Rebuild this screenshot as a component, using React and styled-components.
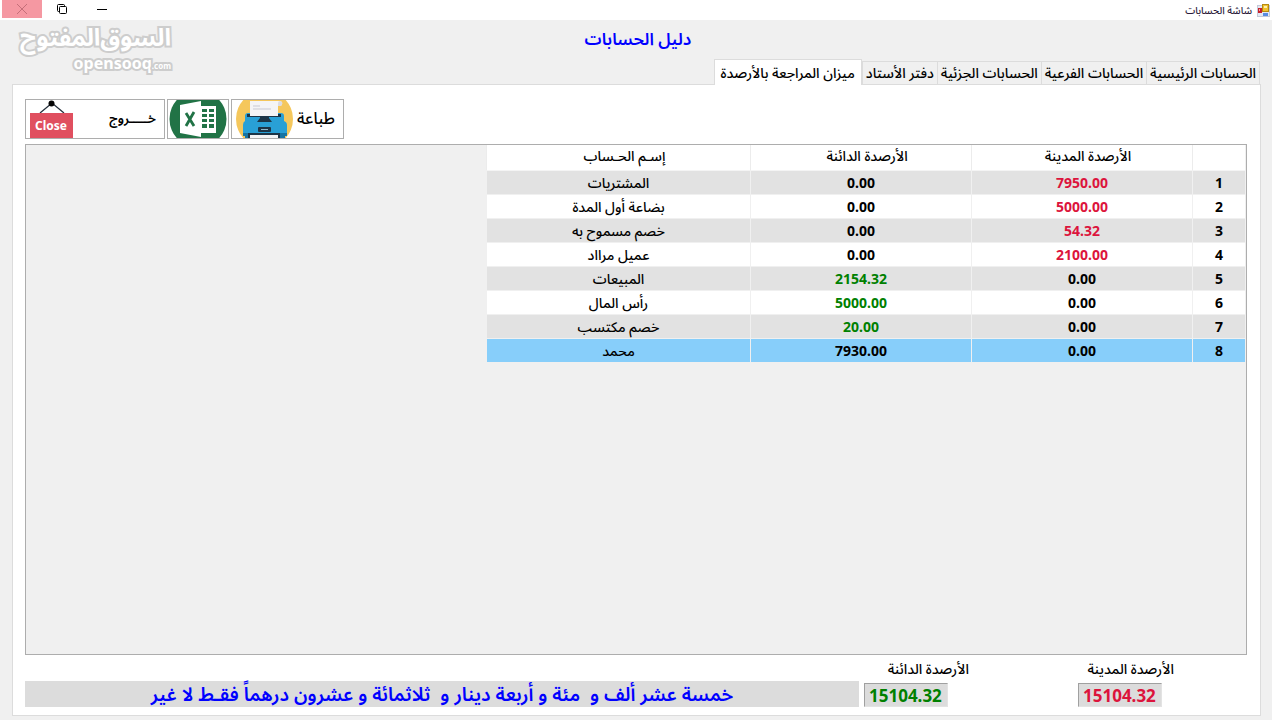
import React, { useState } from 'react'
import styled, { createGlobalStyle } from 'styled-components'


// Accounts screen of the ledger. Shows the trial balance by account balances,
// with the totals and the amount written in words under the grid.

const tabs = [
  'الحسابات الرئيسية',
  'الحسابات الفرعية',
  'الحسابات الجزئية',
  'دفتر الأستاد',
  'ميزان المراجعة بالأرصدة',
]

const accounts = [
  { name: 'المشتريات', debit: '7950.00', credit: '0.00' },
  { name: 'بضاعة أول المدة', debit: '5000.00', credit: '0.00' },
  { name: 'خصم مسموح به', debit: '54.32', credit: '0.00' },
  { name: 'عميل مرااد', debit: '2100.00', credit: '0.00' },
  { name: 'المبيعات', debit: '0.00', credit: '2154.32' },
  { name: 'رأس المال', debit: '0.00', credit: '5000.00' },
  { name: 'خصم مكتسب', debit: '0.00', credit: '20.00' },
  { name: 'محمد', debit: '0.00', credit: '7930.00' },
]

const RED = '#dc143c'
const GREEN = '#008000'

function amountColor(value, color, selected) {
  return value === '0.00' || selected ? '#000' : color
}

function FormIcon() {
  return (
    <svg width="13" height="13" viewBox="0 0 13 13">
      <rect x="0.5" y="1.5" width="12" height="11" fill="#e4e8f2" stroke="#c3c9d8" />
      <rect x="1" y="4" width="4" height="5" fill="#c8202a" />
      <rect x="2" y="5" width="1" height="2" fill="#f0a0a0" />
      <rect x="5.5" y="0.5" width="6" height="7" fill="#f0c22c" stroke="#b78a10" />
      <rect x="7" y="2" width="3" height="2" fill="#fdeeb0" />
      <rect x="6" y="9" width="5" height="3" fill="#5a8be0" />
    </svg>
  )
}

function CloseSign() {
  return (
    <svg width="44" height="38" viewBox="0 0 44 38">
      <path d="M10 13 L22 3 L34 13" fill="none" stroke="#26303c" strokeWidth="1.3" />
      <circle cx="21.5" cy="3.5" r="3" fill="#050505" />
      <rect x="0" y="13" width="43" height="25" fill="#e04f5f" />
      <text x="21" y="30" textAnchor="middle" fill="#fff" fontFamily="Noto Sans, sans-serif" fontWeight="700" fontSize="12">Close</text>
    </svg>
  )
}

function ExcelIcon() {
  return (
    <svg width="58" height="38" viewBox="0 0 58 38">
      <circle cx="29" cy="19" r="28.5" fill="#217346" />
      <rect x="30" y="6" width="17" height="27" fill="#fff" />
      <g fill="#217346">
        <rect x="33" y="9" width="5" height="3" />
        <rect x="40" y="9" width="5" height="3" />
        <rect x="33" y="14" width="5" height="3" />
        <rect x="40" y="14" width="5" height="3" />
        <rect x="33" y="19" width="5" height="3" />
        <rect x="40" y="19" width="5" height="3" />
        <rect x="33" y="24" width="5" height="4" />
        <rect x="40" y="24" width="5" height="4" />
      </g>
      <path d="M11 5 L32 1 V37 L11 33 Z" fill="#fff" />
      <path d="M17 13 L25 26 M25 12 L17 26" stroke="#217346" strokeWidth="2.8" />
    </svg>
  )
}

function PrinterIcon() {
  return (
    <svg width="57" height="38" viewBox="0 0 57 38">
      <circle cx="28.5" cy="19" r="28.5" fill="#f5c75c" />
      <path d="M9 16 Q9 13 12 13 H45 Q48 13 48 16 V21 Q51 22 51 25 V36 H7 V25 Q7 22 9 21 Z" fill="#29a0d6" />
      <rect x="7" y="33" width="44" height="3" fill="#1674a3" />
      <rect x="9" y="36" width="40" height="2" fill="#1674a3" />
      <rect x="11" y="14" width="34" height="3" fill="#1d3547" />
      <path d="M14 1 H44 Q48 2 45 6 L42 6 V16 H14 Z" fill="#f4f4f6" />
      <path d="M44 1 Q48 2 45 6 L42 6 V3 Q42 1 44 1 Z" fill="#dcdce2" />
      <path d="M17 6 H24 M17 9 H35" stroke="#c9c9d2" strokeWidth="1" />
      <path d="M24 16 H33 V18 L36 22 H21 L24 18 Z" fill="#1d3547" />
      <rect x="12" y="33" width="32" height="5" fill="#1d3547" />
      <rect x="14" y="35" width="28" height="3" fill="#f4f4f6" />
      <rect x="22" y="27" width="13" height="5" rx="1" fill="#1d3547" />
      <rect x="25" y="29" width="7" height="1" fill="#8fb7cc" />
    </svg>
  )
}

export default function App() {
  const [activeTab, setActiveTab] = useState(4)
  const [selectedRow, setSelectedRow] = useState(7)

  return (
    <>
      <GlobalStyle />
      <Window dir="rtl">
        <TitleBar>
          <FormIcon />
          <WindowTitle>شاشة الحسابات</WindowTitle>
          <WindowButton aria-label="تصغير">
            <svg width="10" height="10" viewBox="0 0 10 10">
              <path d="M0 5.5 H10" stroke="#000" />
            </svg>
          </WindowButton>
          <WindowButton aria-label="استعادة">
            <svg width="10" height="10" viewBox="0 0 10 10" fill="none" stroke="#000">
              <path d="M2.5 7.5 H1.5 Q0.5 7.5 0.5 6.5 V1.5 Q0.5 0.5 1.5 0.5 H6.5 Q7.5 0.5 7.5 1.5 V2.5" />
              <rect x="2.5" y="2.5" width="7" height="7" rx="1" />
            </svg>
          </WindowButton>
          <WindowButton $close aria-label="إغلاق">
            <svg width="10" height="10" viewBox="0 0 10 10">
              <path d="M0 0 L10 10 M10 0 L0 10" stroke="#c46f79" />
            </svg>
          </WindowButton>
        </TitleBar>

        <Header>
          <Heading>دليل الحسابات</Heading>
          <Watermark>
            <WatermarkName>السوق&zwnj;المفتوح</WatermarkName>
            <WatermarkSite dir="ltr">opensooq<small>.com</small></WatermarkSite>
          </Watermark>
        </Header>

        <TabList role="tablist">
          {tabs.map((tab, i) => (
            <Tab key={tab} role="tab" aria-selected={i === activeTab} $active={i === activeTab} onClick={() => setActiveTab(i)}>
              {tab}
            </Tab>
          ))}
        </TabList>

        <Panel role="tabpanel">
          <Toolbar>
            <ToolButton $width={113}>
              <ToolLabel>طباعة</ToolLabel>
              <PrinterIcon />
            </ToolButton>
            <ToolButton $width={62} aria-label="Excel">
              <ExcelIcon />
            </ToolButton>
            <ToolButton $width={140}>
              <ToolLabel $small>خـــــروج</ToolLabel>
              <CloseSign />
            </ToolButton>
          </Toolbar>

          <Grid>
            <Table>
              <colgroup>
                <col width="53" />
                <col width="221" />
                <col width="221" />
                <col width="264" />
              </colgroup>
              <thead>
                <tr>
                  <HeadCell />
                  <HeadCell>الأرصدة المدينة</HeadCell>
                  <HeadCell>الأرصدة الدائنة</HeadCell>
                  <HeadCell>إسـم الحـساب</HeadCell>
                </tr>
              </thead>
              <tbody>
                {accounts.map((account, i) => (
                  <Row key={account.name} $selected={i === selectedRow} onClick={() => setSelectedRow(i)}>
                    <Cell $bold>{i + 1}</Cell>
                    <Cell $bold $color={amountColor(account.debit, RED, i === selectedRow)}>{account.debit}</Cell>
                    <Cell $bold $color={amountColor(account.credit, GREEN, i === selectedRow)}>{account.credit}</Cell>
                    <Cell>{account.name}</Cell>
                  </Row>
                ))}
              </tbody>
            </Table>
          </Grid>

          <Summary>
            <Total $width={96}>
              <TotalLabel htmlFor="debit">الأرصدة المدينة</TotalLabel>
              <TotalInput id="debit" dir="ltr" readOnly value="15104.32" $color={RED} />
            </Total>
            <Total $width={105}>
              <TotalLabel htmlFor="credit">الأرصدة الدائنة</TotalLabel>
              <TotalInput id="credit" dir="ltr" readOnly value="15104.32" $color={GREEN} />
            </Total>
            <Words>خمسة عشر ألف و&nbsp; مئة و أربعة دينار و&nbsp; ثلاثمائة و عشرون درهماً فقـط لا غير</Words>
          </Summary>
        </Panel>
      </Window>
    </>
  )
}


const GlobalStyle = createGlobalStyle`
  * {
    box-sizing: border-box;
  }

  body {
    margin: 0;
    background-color: #f0f0f0;
  }

  body, button, input {
    font-family: "Noto Sans", "Noto Sans Arabic", "DejaVu Sans", sans-serif;
    color: #000;
  }
`;

const Window = styled.div`
  display: flex;
  flex-direction: column;
  min-height: 100vh;
  background-color: #f0f0f0;
`;

const TitleBar = styled.header`
  display: flex;
  align-items: center;
  height: 20px;
  padding: 0 2px;
  background-color: white;
`;

const WindowTitle = styled.span`
  flex: 1;
  padding: 0 5px;
  font-size: 10px;
  font-weight: 500;
  line-height: 20px;
  color: #2b1a3a;
`;

const WindowButton = styled.button`
  display: flex;
  align-items: center;
  justify-content: center;
  width: 40px;
  height: 20px;
  padding: 0 0 2px;
  border: none;
  background-color: ${props => props.$close ? '#f598a2' : 'transparent'};
  background-clip: content-box;
`;

const Header = styled.div`
  position: relative;
  height: 40px;
`;

const Heading = styled.h1`
  margin: 0;
  padding: 0 8px 0 12px;
  font-size: 17px;
  line-height: 38px;
  font-weight: 600;
  text-align: center;
  color: #0000ff;
`;

const Watermark = styled.div`
  position: absolute;
  left: 22px;
  top: 0;
  width: 149px;
  color: white;
  font-weight: 700;
  -webkit-text-stroke: 4px #cdcdcd;
  paint-order: stroke fill;
  text-align: right;
  white-space: nowrap;
`;

const WatermarkName = styled.div`
  font-size: 24px;
  line-height: 34px;
`;

const WatermarkSite = styled.div`
  font-size: 16px;
  line-height: 18px;

  small {
    font-size: 8px;
  }
`;

const TabList = styled.div`
  display: flex;
  align-items: flex-end;
  height: 24px;
  margin: 0 12px;
`;

const Tab = styled.button`
  height: ${props => props.$active ? '26px' : '23px'};
  margin-bottom: ${props => props.$active ? '-1px' : '0'};
  padding: 0 ${props => props.$active ? '6px' : '3px'};
  border: 1px solid #dcdcdc;
  border-right-width: ${props => props.$active ? '1px' : '0'};
  border-bottom: none;
  background-color: ${props => props.$active ? 'white' : '#f0f0f0'};
  font-size: 14px;
  font-weight: 500;
  line-height: 22px;
  white-space: nowrap;
  z-index: 1;

  &:first-child {
    border-right-width: 1px;
  }
`;

const Panel = styled.main`
  flex: 1;
  display: flex;
  flex-direction: column;
  margin: 0 11px 4px 12px;
  padding: 14px 13px 8px 12px;
  border: 1px solid #dcdcdc;
  background-color: white;
`;

const Toolbar = styled.div`
  display: flex;
  justify-content: flex-end;
  gap: 2px;
`;

const ToolButton = styled.button`
  display: flex;
  align-items: center;
  justify-content: space-between;
  width: ${props => props.$width}px;
  height: 40px;
  padding: 0 ${props => props.$width > 100 ? '8px' : '1px'} 0 ${props => props.$width > 100 ? '4px' : '1px'};
  border: 1px solid #adadad;
  background-color: white;

  &:hover {
    border-color: #0078d7;
  }
`;

const ToolLabel = styled.span`
  font-size: ${props => props.$small ? '13px' : '16px'};
  font-weight: ${props => props.$small ? 600 : 500};
`;

const Grid = styled.div`
  flex: 1;
  margin-top: 5px;
  padding: 0 1px;
  border: 1px solid #adadad;
  background-color: #f0f0f0;
`;

const Table = styled.table`
  width: 759px;
  table-layout: fixed;
  border-collapse: separate;
  border-spacing: 0;
  background-color: white;
`;

const HeadCell = styled.th`
  height: 26px;
  padding: 0 0 4px 12px;
  border-left: 1px solid #ececec;
  border-bottom: 1px solid #f4f4f4;
  font-size: 14px;
  font-weight: 500;
  line-height: 20px;
`;

const Row = styled.tr`
  background-color: ${props => props.$selected ? '#87cefa' : 'white'};

  &:nth-child(odd) {
    background-color: ${props => props.$selected ? '#87cefa' : '#e2e2e2'};
  }
`;

const Cell = styled.td`
  height: 24px;
  padding: 0;
  border-left: 1px solid #f0f0f0;
  border-bottom: 1px solid #f0f0f0;
  font-size: 14px;
  font-weight: ${props => props.$bold ? 700 : 500};
  line-height: 20px;
  text-align: center;
  color: ${props => props.$color || '#000'};
`;

const Summary = styled.div`
  display: flex;
  align-items: flex-end;
  padding-right: 73px;
  margin-top: 4px;
`;

const Total = styled.div`
  display: flex;
  flex-direction: column;
  width: ${props => props.$width}px;

  & + & {
    margin-right: 109px;
  }
`;

const TotalLabel = styled.label`
  font-size: 14px;
  font-weight: 500;
  line-height: 20px;
  white-space: nowrap;
`;

const TotalInput = styled.input`
  align-self: flex-end;
  width: 84px;
  height: 24px;
  margin-top: 4px;
  padding: 0 4px;
  border: 1px solid #e3e3e3;
  border-top-color: #a0a0a0;
  border-left-color: #a0a0a0;
  background-color: #dcdcdc;
  font-size: 17px;
  font-weight: 700;
  color: ${props => props.$color};
`;

const Words = styled.div`
  flex: 1;
  margin-right: 5px;
  background-color: #dcdcdc;
  font-size: 19px;
  font-weight: 600;
  line-height: 26px;
  text-align: center;
  color: #0000ff;
`;
